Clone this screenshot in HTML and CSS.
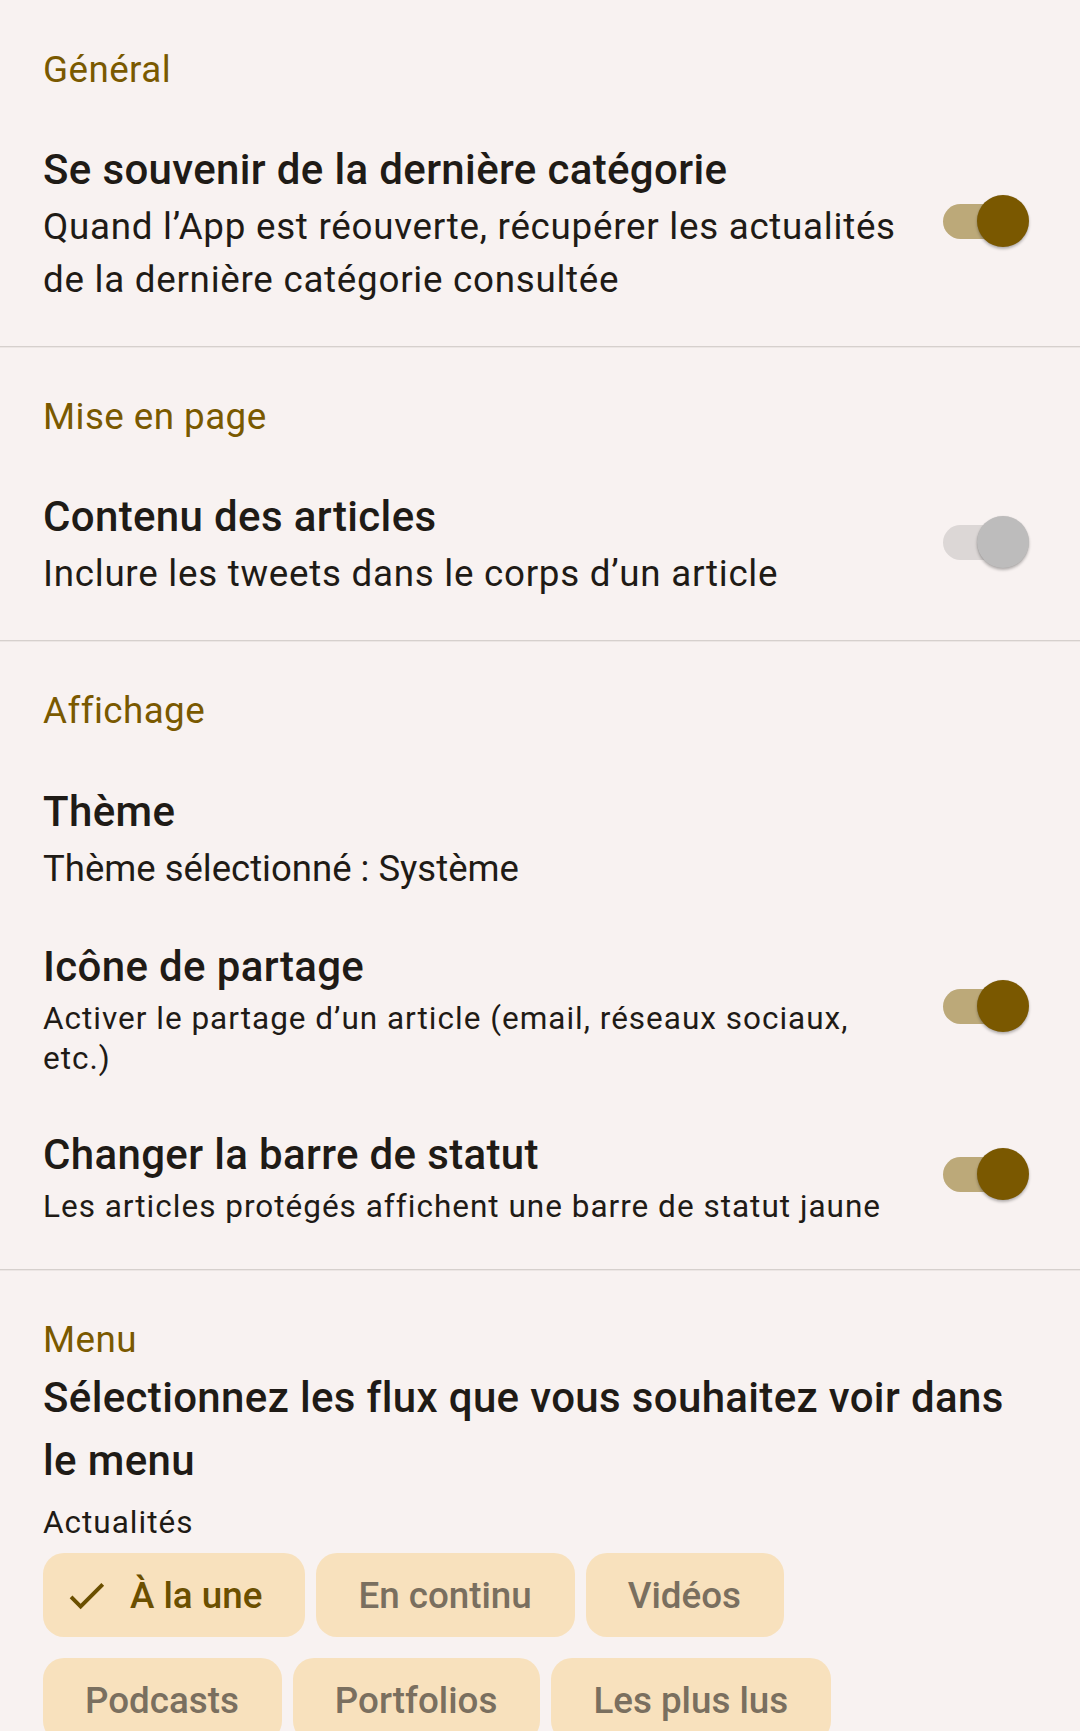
FILE: index.html
```html
<!DOCTYPE html>
<html lang="fr">
<head>
<meta charset="utf-8">
<title>Paramètres</title>
<link rel="stylesheet" href="styles.css">
</head>
<body>
<main class="settings">
  <section class="group">
    <h2 class="group-title">Général</h2>
    <div class="pref">
      <div class="pref-text">
        <div class="pref-title">Se souvenir de la dernière catégorie</div>
        <div class="pref-sub">Quand l’App est réouverte, récupérer les actualités de la dernière catégorie consultée</div>
      </div>
      <div class="switch on"><span class="track"></span><span class="thumb"></span></div>
    </div>
  </section>

  <section class="group">
    <h2 class="group-title">Mise en page</h2>
    <div class="pref">
      <div class="pref-text">
        <div class="pref-title">Contenu des articles</div>
        <div class="pref-sub">Inclure les tweets dans le corps d’un article</div>
      </div>
      <div class="switch off"><span class="track"></span><span class="thumb"></span></div>
    </div>
  </section>

  <section class="group group-last-small">
    <h2 class="group-title">Affichage</h2>
    <div class="pref pref-theme">
      <div class="pref-text">
        <div class="pref-title">Thème</div>
        <div class="pref-sub pref-sub-plain">Thème sélectionné : Système</div>
      </div>
    </div>
    <div class="pref pref-small">
      <div class="pref-text">
        <div class="pref-title">Icône de partage</div>
        <div class="pref-sub-small">Activer le partage d’un article (email, réseaux sociaux, etc.)</div>
      </div>
      <div class="switch on"><span class="track"></span><span class="thumb"></span></div>
    </div>
    <div class="pref pref-small">
      <div class="pref-text">
        <div class="pref-title">Changer la barre de statut</div>
        <div class="pref-sub-small">Les articles protégés affichent une barre de statut jaune</div>
      </div>
      <div class="switch on"><span class="track"></span><span class="thumb"></span></div>
    </div>
  </section>

  <section class="group group-menu">
    <h2 class="group-title">Menu</h2>
    <div class="menu-title">Sélectionnez les flux que vous souhaitez voir dans le menu</div>
    <div class="menu-label">Actualités</div>
    <div class="chips">
      <div class="chip selected">
        <svg class="chip-icon" viewBox="0 0 24 24" aria-hidden="true"><path d="M9 16.17L4.83 12l-1.42 1.41L9 19 21 7l-1.41-1.41z"/></svg>
        <span>À la une</span>
      </div>
      <div class="chip"><span>En continu</span></div>
      <div class="chip"><span>Vidéos</span></div>
      <div class="chip"><span>Podcasts</span></div>
      <div class="chip"><span>Portfolios</span></div>
      <div class="chip"><span>Les plus lus</span></div>
    </div>
  </section>
</main>
</body>
</html>
```
FILE: styles.css
```css
html, body {
  margin: 0;
  padding: 0;
  background: #f8f2f1;
}
body {
  font-family: Roboto, "Noto Sans", sans-serif;
  color: #1f1b16;
  width: 1080px;
  height: 1731px;
  overflow: hidden;
}
.settings {
  display: flex;
  flex-direction: column;
}
.group {
  padding: 46px 0 18px;
  border-bottom: 1px solid #d6d0cd;
  box-shadow: 0 1px 0 #ece6e4;
}
.group-last-small {
  padding-bottom: 16px;
}
.group-menu {
  padding: 46px 43px 0;
  border-bottom: none;
  box-shadow: none;
}
.group-title {
  margin: 0 0 26px;
  padding: 0 43px;
  font-size: 36.75px;
  line-height: 48px;
  font-weight: 400;
  letter-spacing: 0.45px;
  color: #7a5900;
}
.group-menu .group-title {
  padding: 0;
  margin: 0;
}
.pref {
  display: flex;
  align-items: center;
  padding: 22px 47px 22px 43px;
}
.pref-theme {
  padding-top: 23px;
}
.pref-small {
  padding-bottom: 26px;
}
.pref-text {
  flex: 1;
  min-width: 0;
}
.pref-title {
  font-size: 42px;
  line-height: 56px;
  font-weight: 500;
  letter-spacing: 0.35px;
  color: #1f1b16;
}
.pref-sub {
  margin-top: 2px;
  font-size: 36.75px;
  line-height: 53px;
  letter-spacing: 0.73px;
  color: #1f1b16;
}
.pref-sub-plain {
  letter-spacing: 0;
  font-size: 36.5px;
}
.pref-sub-small {
  margin-top: 4px;
  font-size: 31.5px;
  line-height: 40px;
  letter-spacing: 1px;
  color: #1f1b16;
}
.switch {
  position: relative;
  flex: none;
  width: 90px;
  height: 52px;
  margin-left: 35px;
  margin-bottom: 6px;
}
.switch .track {
  position: absolute;
  left: 0;
  top: 9px;
  width: 84px;
  height: 35px;
  border-radius: 18px;
}
.switch .thumb {
  position: absolute;
  left: 34px;
  top: 0;
  width: 52px;
  height: 52px;
  border-radius: 50%;
  box-shadow: 0 2px 3px rgba(0, 0, 0, 0.28), 0 0 1px rgba(0, 0, 0, 0.12);
}
.switch.on .track { background: #bca979; }
.switch.on .thumb { background: #7a5800; }
.switch.off .track { background: #dcd7d6; }
.switch.off .thumb { background: #bdbcbc; }

.menu-title {
  margin-top: 2px;
  font-size: 42px;
  line-height: 63px;
  font-weight: 500;
  letter-spacing: 0.35px;
  color: #1f1b16;
}
.menu-label {
  margin-top: 11px;
  font-size: 31.5px;
  line-height: 40px;
  letter-spacing: 1px;
  color: #1f1b16;
}
.chips {
  margin-top: 10px;
  padding-right: 60px;
  display: flex;
  flex-wrap: wrap;
  column-gap: 11px;
  row-gap: 21px;
}
.chip {
  display: flex;
  align-items: center;
  height: 84px;
  padding: 0 43px 0 42px;
  border-radius: 21px;
  background: #f8e1bd;
  font-size: 36.75px;
  font-weight: 500;
  letter-spacing: 0;
  color: #7a6f5f;
  box-sizing: border-box;
}
.chip.selected {
  padding-left: 20px;
  color: #6b4f00;
}
.chip-icon {
  width: 47px;
  height: 47px;
  margin-right: 20px;
  fill: #6b4f00;
}
```
